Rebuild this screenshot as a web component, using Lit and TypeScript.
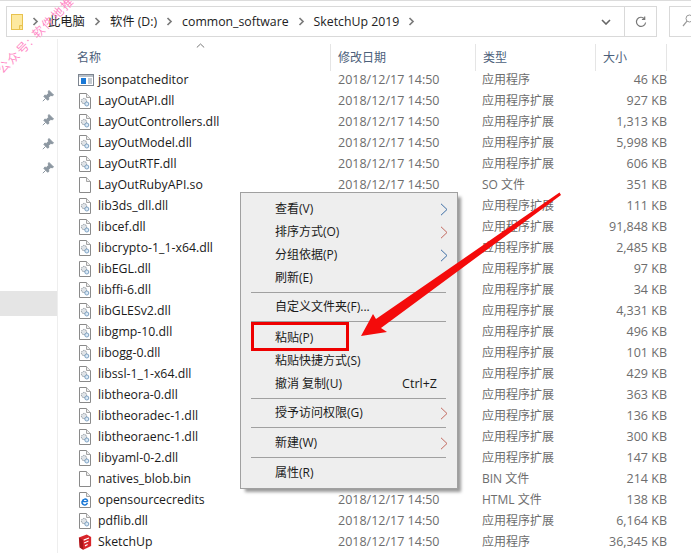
import { LitElement, html, css, svg } from "lit";
import { customElement } from "lit/decorators.js";

type Row = [string, string, string, string, string];
const D = "2018/12/17 14:50";
const X = "应用程序扩展";
const rows: Row[] = [
  ["app", "jsonpatcheditor", D, "应用程序", "46 KB"],
  ["dll", "LayOutAPI.dll", D, X, "927 KB"],
  ["dll", "LayOutControllers.dll", D, X, "1,313 KB"],
  ["dll", "LayOutModel.dll", D, X, "5,998 KB"],
  ["dll", "LayOutRTF.dll", D, X, "606 KB"],
  ["file", "LayOutRubyAPI.so", D, "SO 文件", "351 KB"],
  ["dll", "lib3ds_dll.dll", D, X, "111 KB"],
  ["dll", "libcef.dll", D, X, "91,848 KB"],
  ["dll", "libcrypto-1_1-x64.dll", D, X, "2,485 KB"],
  ["dll", "libEGL.dll", D, X, "97 KB"],
  ["dll", "libffi-6.dll", D, X, "34 KB"],
  ["dll", "libGLESv2.dll", D, X, "4,331 KB"],
  ["dll", "libgmp-10.dll", D, X, "496 KB"],
  ["dll", "libogg-0.dll", D, X, "101 KB"],
  ["dll", "libssl-1_1-x64.dll", D, X, "429 KB"],
  ["dll", "libtheora-0.dll", D, X, "363 KB"],
  ["dll", "libtheoradec-1.dll", D, X, "136 KB"],
  ["dll", "libtheoraenc-1.dll", D, X, "300 KB"],
  ["dll", "libyaml-0-2.dll", D, X, "147 KB"],
  ["file", "natives_blob.bin", D, "BIN 文件", "214 KB"],
  ["html", "opensourcecredits", D, "HTML 文件", "138 KB"],
  ["dll", "pdflib.dll", D, X, "6,164 KB"],
  ["sketch", "SketchUp", D, "应用程序", "36,345 KB"],
];

const sheet = svg`<path d="M1.5 .5H8.5L12.5 4.5V15.5H1.5Z" fill="#fff" stroke="#8a8a8a"/><path d="M8.5 .5V4.5H12.5" fill="#eee" stroke="#a5a5a5"/>`;
const icons: Record<string, unknown> = {
  app: html`<svg class="wide" width="16" height="16" viewBox="0 0 16 16"><rect x=".5" y="2.5" width="15" height="11" fill="#fff" stroke="#7d8590"/><rect x="1" y="3" width="14" height="2" fill="#b9c0c8"/><rect x="3" y="6" width="5" height="6" fill="#1a78d6"/><path d="M10 7h4M10 9h4M10 11h4" stroke="#8a97a5"/></svg>`,
  dll: html`<svg width="14" height="16" viewBox="0 0 14 16">${sheet}<circle cx="6" cy="8" r="2.6" fill="#dfe3e7" stroke="#8c949c" stroke-dasharray="1.5 .7"/><circle cx="8.8" cy="11" r="2" fill="#dbe9f5" stroke="#7fa3c4"/></svg>`,
  file: html`<svg width="14" height="16" viewBox="0 0 14 16">${sheet}</svg>`,
  html: html`<svg width="14" height="16" viewBox="0 0 14 16">${sheet}<path d="M9.7 9.6H5a2.3 2.3 0 0 1 4.3-1.4M9.4 11.1A2.6 2.6 0 0 1 4.2 9.3 2.8 2.8 0 0 1 9.7 9.6" fill="none" stroke="#1a78d6" stroke-width="1.4"/></svg>`,
  sketch: html`<svg width="14" height="16" viewBox="0 0 16 16" preserveAspectRatio="none"><path d="M1 3.5 10 0.5 15 3V12L6 15.8 2 13.5Z" fill="#d9252b"/><path d="M1 3.5 2 13.5 6 15.8 5.5 6Z" fill="#a8161b"/><path d="M6.5 6.2 12.5 4M7 9 12 7M8 11.8 11 10.5" stroke="#fff" stroke-width="1.3" fill="none"/></svg>`,
};

const pin = html`<svg class="pin" width="12" height="12" viewBox="0 0 12 12"><path d="M7 .5 11.5 5 10.2 5.8 8.8 5.4 6.6 7.6 6.8 9.4 5.6 10.2 1.9 6.4 2.7 5.2 4.5 5.4 6.6 3.2 6.2 1.8Z M3.6 8.4 .8 11.2" fill="#8c97a1" stroke="#8c97a1"/></svg>`;
const chev = html`<svg class="chev" width="7" height="9" viewBox="0 0 7 9"><path d="M1.5 1 5 4.5 1.5 8" fill="none" stroke="#7b7b7b" stroke-width="1.7"/></svg>`;
const sub = html`<svg class="sub" width="8" height="13" viewBox="0 0 8 13"><path d="M1 .8 7 6.5 1 12.2" fill="none" stroke="#3d6ea5" stroke-width="1"/></svg>`;
const subR = html`<svg class="sub" width="8" height="13" viewBox="0 0 8 13"><path d="M1 .8 7 6.5 1 12.2" fill="none" stroke="#c2685e" stroke-width="1"/></svg>`;

@customElement("app-root")
export class AppRoot extends LitElement {
  static styles = css`
    :host { display: block; width: 691px; height: 560px; position: relative; overflow: hidden; background: #fff;
      font: 12px/16px "Open Sans", "Noto Sans CJK SC", sans-serif; color: #1a1a1a; }
    .top { height: 1px; background: #dcdcdc; }
    .bar { display: flex; gap: 12px; padding: 5px 0 0 6px; height: 38px; box-sizing: border-box; }
    .addr { width: 651px; height: 31px; box-sizing: border-box; border: 1px solid #d9d9d9; display: flex; align-items: center; flex: none; }
    .folder { margin: 0 9px 0 4px; flex: none; display: block; }
    .crumbs { display: flex; align-items: center; flex: 1; gap: 9px; font-size: 12.3px; color: #222; }
    .chev { flex: none; }
    .drop { width: 36px; display: flex; justify-content: center; }
    .refresh { width: 31px; height: 100%; border-left: 1px solid #d9d9d9; display: flex; align-items: center; justify-content: center; }
    .search { flex: none; width: 30px; height: 31px; box-sizing: border-box; border: 1px solid #d9d9d9; border-right: 0; padding: 7px 0 0 12px; }
    .main { display: flex; height: 521px; }
    .nav { width: 58px; flex: none; box-sizing: border-box; border-right: 1px solid #eeeeee; padding-top: 51px; height: 514px; display: flex; flex-direction: column; }
    .pins { display: flex; flex-direction: column; gap: 12px; align-items: flex-end; padding-right: 3px; }
    .pin { display: block; }
    .sel { margin-top: 117px; height: 25px; background: #e5e5e5; }
    .list { flex: 1; min-width: 0; }
    .head, .row { display: grid; grid-template-columns: 273px 145px 120px 71px 14px; }
    .head { height: 27px; margin-top: 5px; margin-bottom: -2px; position: relative; color: #4c607a; }
    .head > div { padding: 6px 0 0 7px; border-right: 1px solid #e5e5e5; }
    .head > div:first-of-type { padding-left: 19px; }
    .head > div:last-of-type { border: 0; }
    .caret { position: absolute; left: 138px; top: -1px; display: block; }
    .row { height: 21px; align-items: center; color: #6d6d6d; position: relative; }
    .name { display: flex; align-items: center; padding-left: 20px; color: #1a1a1a; white-space: nowrap; font-size: 12.3px; }
    .name svg { margin-right: 6px; flex: none; }
    .name svg.wide { margin-right: 4px; }
    .date { padding-left: 7px; white-space: nowrap; font-size: 12.5px; }
    .type { padding-left: 6px; white-space: nowrap; }
    .size { text-align: right; white-space: nowrap; font-size: 12.5px; }
    .menu { position: absolute; left: 240px; top: 192px; width: 218px; height: 297px; box-sizing: border-box; background: #eeeeee; border: 1px solid #a0a0a0; box-shadow: 4px 4px 3px -1px #9a9a9a; padding: 3.5px 2px; color: #1a1a1a; }
    .mi { height: 23px; box-sizing: border-box; padding-top: 2px; display: flex; align-items: center; padding-left: 32px; padding-right: 8px; }
    .mi .grow { flex: 1; }
    .mi .sub { flex: none; margin-right: -1px; }
    .mi .key { margin-right: 10px; font-size: 12.5px; }
    .sep { height: 1px; background: #a0a0a0; margin: 3px 9px 2px 8px; }
    .sep.l { margin-bottom: 4px; }
    .sep.m { margin-bottom: 3px; }
    .box { position: absolute; left: 251px; top: 322px; width: 98px; height: 29px; box-sizing: border-box; border: 3px solid #ee0000; }
    .arrow { position: absolute; left: 0; top: 0; display: block; pointer-events: none; }
    .mark { position: absolute; left: -16px; top: 28px; width: 104px; text-align: center; transform: rotate(-45deg); color: #ff8ac6; font-size: 12px; letter-spacing: 1.4px; white-space: nowrap; line-height: 14px; }
  `;

  private menuItem(t: string, kind: "" | "b" | "r" = "", key = "") {
    return html`<div class="mi"><span>${t}</span><span class="grow"></span>${key ? html`<span class="key">${key}</span>` : ""}${kind === "b" ? sub : kind === "r" ? subR : ""}</div>`;
  }

  render() {
    return html`
      <div class="top"></div>
      <div class="bar">
        <div class="addr">
          <svg class="folder" width="12" height="16" viewBox="0 0 12 16"><rect x=".5" y=".5" width="11" height="15" fill="#fde99f" stroke="#e8c24e"/><path d="M8.5 15.5V11.5H11.5" fill="#f7dc84" stroke="#e8c24e"/></svg>
          <div class="crumbs">
            ${chev}
            <span>此电脑</span>${chev}
            <span>软件 (D:)</span>${chev}
            <span>common_software</span>${chev}
            <span>SketchUp 2019</span>${chev}
          </div>
          <div class="drop"><svg width="10" height="6" viewBox="0 0 10 6"><path d="M1 1 5 5 9 1" fill="none" stroke="#666" stroke-width="1.6"/></svg></div>
          <div class="refresh"><svg width="12" height="12" viewBox="0 0 12 12"><path d="M9.5 2.8A4.6 4.6 0 1 0 10.6 6.5M9.7 .5V3.3H6.9" fill="none" stroke="#777" stroke-width="1.2"/></svg></div>
        </div>
        <div class="search"><svg width="12" height="13" viewBox="0 0 12 13"><circle cx="7.5" cy="4.5" r="3.5" fill="none" stroke="#999"/><path d="M5 7.2 1 12" stroke="#999" stroke-width="1.2"/></svg></div>
      </div>
      <div class="main">
        <div class="nav">
          <div class="pins">${pin}${pin}${pin}${pin}</div>
          <div class="sel"></div>
        </div>
        <div class="list">
          <div class="head">
            <svg class="caret" width="9" height="5" viewBox="0 0 9 5"><path d="M.8 4.5 4.5 1 8.2 4.5" fill="none" stroke="#777"/></svg>
            <div>名称</div><div>修改日期</div><div>类型</div><div>大小</div><div></div>
          </div>
          ${rows.map(
            (r) => html`<div class="row">
              <div class="name">${icons[r[0]]}<span>${r[1]}</span></div>
              <div class="date">${r[2]}</div>
              <div class="type">${r[3]}</div>
              <div class="size">${r[4]}</div>
              <div></div>
            </div>`
          )}
        </div>
      </div>
      <div class="menu">
        ${this.menuItem("查看(V)", "b")}
        ${this.menuItem("排序方式(O)", "r")}
        ${this.menuItem("分组依据(P)", "b")}
        ${this.menuItem("刷新(E)")}
        <div class="sep"></div>
        ${this.menuItem("自定义文件夹(F)...")}
        <div class="sep l"></div>
        ${this.menuItem("粘贴(P)")}
        ${this.menuItem("粘贴快捷方式(S)")}
        ${this.menuItem("撤消 复制(U)", "", "Ctrl+Z")}
        <div class="sep"></div>
        ${this.menuItem("授予访问权限(G)", "r")}
        <div class="sep m"></div>
        ${this.menuItem("新建(W)", "r")}
        <div class="sep m"></div>
        ${this.menuItem("属性(R)")}
      </div>
      <div class="box"></div>
      <svg class="arrow" width="691" height="560" viewBox="0 0 691 560"><path d="M559.5 192.5 561 195 381 328 387 332 361 336 373 314 376 319Z" fill="#f40b0b"/></svg>
      <div class="mark">公众号: 软件地推</div>
    `;
  }
}
